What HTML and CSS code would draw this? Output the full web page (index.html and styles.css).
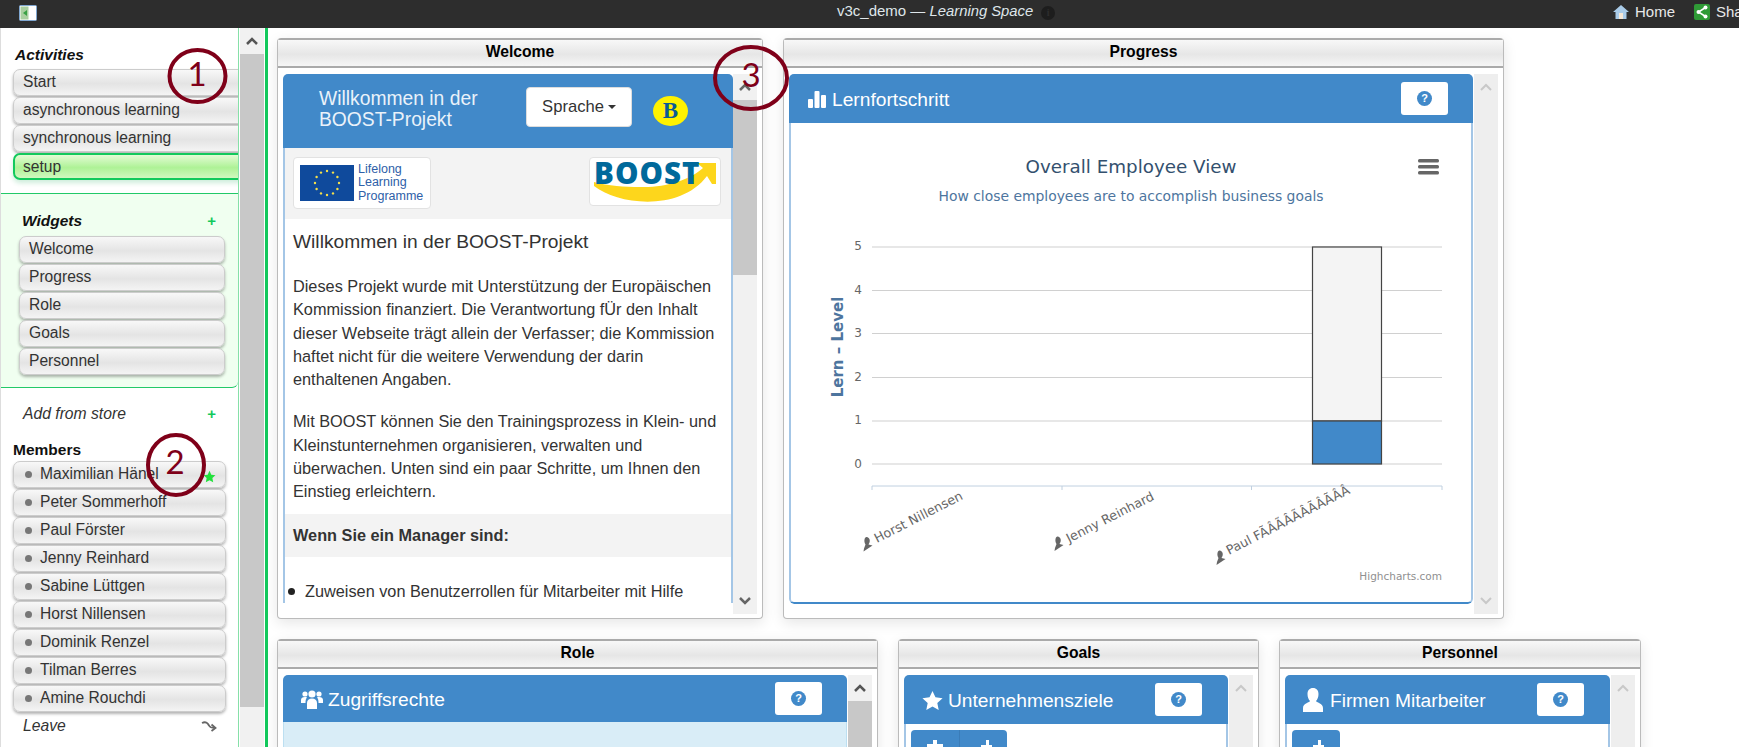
FILE: index.html
```html
<!DOCTYPE html>
<html lang="de">
<head>
<meta charset="utf-8">
<title>v3c_demo — Learning Space</title>
<link rel="stylesheet" href="styles.css">
</head>
<body>
<header class="topbar">
  <svg class="app-icon" viewBox="0 0 18 16"><rect x=".5" y=".5" width="17" height="15" rx="1" fill="#fff" stroke="#7fa6d0"/><rect x="1.5" y="1.5" width="8" height="13" fill="#a9cfa0"/><path d="M8 5 4 8l4 3z" fill="#39a045"/></svg>
  <div class="topbar-title">v3c_demo — <em>Learning Space</em><span class="info-dot">i</span></div>
  <nav class="topbar-links">
    <span class="top-link"><svg class="top-icon" viewBox="0 0 16 16"><path d="M8 1 0 8h2.500v7h11V8H16z" fill="#a9cbe8"/><rect x="6" y="9" width="4" height="6" fill="#f4e7d6"/></svg>Home</span>
    <span class="top-link"><svg class="top-icon" viewBox="0 0 16 16"><rect width="16" height="16" rx="2" fill="#2f9a36"/><path d="M11.500 3.500 4.500 8l7 4.500" fill="none" stroke="#fff" stroke-width="1.500"/><circle cx="4.500" cy="8" r="2" fill="#fff"/><circle cx="11.500" cy="3.500" r="2" fill="#fff"/><circle cx="11.500" cy="12.500" r="2" fill="#fff"/></svg>Share</span>
  </nav>
</header>

<div class="shell">
  <aside class="sidebar">
    <h3 class="side-title">Activities</h3>
    <ul class="btn-list activities">
      <li class="side-btn">Start</li>
      <li class="side-btn">asynchronous learning</li>
      <li class="side-btn">synchronous learning</li>
      <li class="side-btn active">setup</li>
    </ul>
    <section class="widgets-box">
      <div class="row-head"><h3 class="side-title">Widgets</h3><span class="plus">+</span></div>
      <ul class="btn-list">
        <li class="side-btn">Welcome</li>
        <li class="side-btn">Progress</li>
        <li class="side-btn">Role</li>
        <li class="side-btn">Goals</li>
        <li class="side-btn">Personnel</li>
      </ul>
    </section>
    <div class="add-store"><em>Add from store</em><span class="plus">+</span></div>
    <h3 class="members-title">Members</h3>
    <ul class="btn-list members">
      <li class="side-btn member"><i class="dot"></i>Maximilian Hänel<svg class="star" viewBox="0 0 24 24"><path d="M12 1.500 15.300 8.700 23 9.600 17.300 14.900 18.800 22.500 12 18.700 5.200 22.500 6.700 14.900 1 9.600 8.700 8.700z" fill="#22e03c"/></svg></li>
      <li class="side-btn member"><i class="dot"></i>Peter Sommerhoff</li>
      <li class="side-btn member"><i class="dot"></i>Paul Förster</li>
      <li class="side-btn member"><i class="dot"></i>Jenny Reinhard</li>
      <li class="side-btn member"><i class="dot"></i>Sabine Lüttgen</li>
      <li class="side-btn member"><i class="dot"></i>Horst Nillensen</li>
      <li class="side-btn member"><i class="dot"></i>Dominik Renzel</li>
      <li class="side-btn member"><i class="dot"></i>Tilman Berres</li>
      <li class="side-btn member"><i class="dot"></i>Amine Rouchdi</li>
    </ul>
    <div class="leave"><em>Leave</em><svg class="leave-icon" viewBox="0 0 16 12"><path d="M1 3C5 1 7 3.500 8 5.500 9 8 11 8 14 8" fill="none" stroke="#666" stroke-width="1.800"/><path d="M10.500 4.500 14.500 8 10.500 11" fill="none" stroke="#666" stroke-width="1.800"/></svg></div>
  </aside>
  <div class="side-scroll">
    <div class="sb-btn"><svg class="chev" viewBox="0 0 14 10"><path d="M2 8 7 3l5 5" fill="none" stroke="#555" stroke-width="2.500"/></svg></div>
    <div class="side-thumb"></div>
  </div>
  <div class="green-line"></div>

  <main class="board">
    <div class="board-row">
      <section class="widget w-welcome">
        <h4 class="widget-head">Welcome</h4>
        <div class="widget-body">
          <div class="panel">
            <div class="welcome-bar">
              <div class="welcome-title">Willkommen in der<br>BOOST-Projekt</div>
              <div class="lang-btn">Sprache<i class="caret"></i></div>
              <div class="b-badge">B</div>
            </div>
            <div class="panel-main">
              <div class="logo-row">
                <div class="logo-box lll">
                  <svg class="eu-flag" viewBox="0 0 54 36"><rect width="54" height="36" fill="#0f4a9c"/><g fill="#f5e04a"><circle cx="27" cy="6" r="1.200"/><circle cx="33" cy="7.600" r="1.200"/><circle cx="37.400" cy="12" r="1.200"/><circle cx="39" cy="18" r="1.200"/><circle cx="37.400" cy="24" r="1.200"/><circle cx="33" cy="28.400" r="1.200"/><circle cx="27" cy="30" r="1.200"/><circle cx="21" cy="28.400" r="1.200"/><circle cx="16.600" cy="24" r="1.200"/><circle cx="15" cy="18" r="1.200"/><circle cx="16.600" cy="12" r="1.200"/><circle cx="21" cy="7.600" r="1.200"/></g></svg>
                  <div class="lll-text">Lifelong<br>Learning<br>Programme</div>
                </div>
                <div class="logo-box boost">
                  <svg class="boost-logo" viewBox="590 158 130 47"><path d="M594 186C618 205 680 212 707 176L712 184H716V163H697L703 168C690 180 664 188 640 187 625 187 608 186 594 182z" fill="#fdd61c"/><text x="594" y="184" class="boost-text">BOOST</text></svg>
                </div>
              </div>
              <article class="welcome-text">
                <h2 class="w-h">Willkommen in der BOOST-Projekt</h2>
                <p class="w-p">Dieses Projekt wurde mit Unterstützung der Europäischen Kommission finanziert. Die Verantwortung fÜr den Inhalt dieser Webseite trägt allein der Verfasser; die Kommission haftet nicht für die weitere Verwendung der darin enthaltenen Angaben.</p>
                <p class="w-p">Mit BOOST können Sie den Trainingsprozess in Klein- und Kleinstunternehmen organisieren, verwalten und überwachen. Unten sind ein paar Schritte, um Ihnen den Einstieg erleichtern.</p>
              </article>
              <div class="manager-band">Wenn Sie ein Manager sind:</div>
              <ul class="w-list"><li>Zuweisen von Benutzerrollen für Mitarbeiter mit Hilfe</li></ul>
            </div>
          </div>
          <div class="vbar">
            <div class="sb-btn tall"><svg class="chev" viewBox="0 0 14 10"><path d="M2 8 7 3l5 5" fill="none" stroke="#666" stroke-width="2.500"/></svg></div>
            <div class="thumb thumb-welcome"></div>
            <div class="track"></div>
            <div class="sb-btn tall"><svg class="chev" viewBox="0 0 14 10"><path d="M2 2l5 5 5-5" fill="none" stroke="#666" stroke-width="2.500"/></svg></div>
          </div>
        </div>
      </section>

      <section class="widget w-progress">
        <h4 class="widget-head">Progress</h4>
        <div class="widget-body">
          <div class="panel panel-chart">
            <div class="blue-bar bar-progress">
              <span class="bar-title"><svg class="bar-icon" viewBox="0 0 18 18"><rect x="0" y="9" width="5" height="9" rx="1" fill="#fff"/><rect x="6.500" y="1" width="5" height="17" rx="1" fill="#fff"/><rect x="13" y="5" width="5" height="13" rx="1" fill="#fff"/></svg>Lernfortschritt</span>
              <span class="help-btn"><span class="help-q">?</span></span>
            </div>
            <div class="panel-main main-chart">
            <svg class="chart" viewBox="791 123 680 479">
              <text x="1131" y="173" class="c-title">Overall Employee View</text>
              <text x="1131" y="201" class="c-sub">How close employees are to accomplish business goals</text>
              <g fill="#666"><rect x="1418" y="159" width="21" height="3.500" rx="1.500"/><rect x="1418" y="165" width="21" height="3.500" rx="1.500"/><rect x="1418" y="171" width="21" height="3.500" rx="1.500"/></g>
              <g stroke="#d0d0d0" stroke-width="1.200"><path d="M872 247H1442M872 290.500H1442M872 333.500H1442M872 377.500H1442M872 421H1442M872 464H1442"/></g>
              <g class="c-y"><text x="862" y="250">5</text><text x="862" y="294">4</text><text x="862" y="337">3</text><text x="862" y="381">2</text><text x="862" y="424">1</text><text x="862" y="468">0</text></g>
              <text transform="translate(843 347) rotate(-90)" class="c-ytitle">Lern – Level</text>
              <rect x="1312.500" y="247" width="69" height="174" fill="#f4f4f4" stroke="#444" stroke-width="1.200"/>
              <rect x="1312.500" y="421" width="69" height="43" fill="#4189c9" stroke="#444" stroke-width="1.200"/>
              <path d="M872 490V486H1442V490M1062 486V490M1251.500 486V490" fill="none" stroke="#c0d0e0"/>
              <g class="c-x">
                <text transform="translate(877 543) rotate(-27)">Horst Nillensen</text>
                <text transform="translate(1069 543) rotate(-27)">Jenny Reinhard</text>
                <text transform="translate(1229 555) rotate(-27)">Paul FÃÂÃÂÃÂÃÂÃÂÂ</text>
              </g>
              <g fill="#666">
                <path d="M866 537c3 0 4.500 2.500 3.500 5.500l-1 2 4 1-9 6 .5-3 1.500-4c-2-3-1-7.500 1-7.500z"/>
                <path d="M1057 536.500c3 0 4.500 2.500 3.500 5.500l-1 2 4 1-9 6 .5-3 1.500-4c-2-3-1-7.500 1-7.500z"/>
                <path d="M1219 550.500c3 0 4.500 2.500 3.500 5.500l-1 2 4 1-9 6 .5-3 1.500-4c-2-3-1-7.500 1-7.500z"/>
              </g>
              <text x="1442" y="580" class="c-credit">Highcharts.com</text>
            </svg>
            </div>
          </div>
          <div class="vbar off">
            <div class="sb-btn tall"><svg class="chev" viewBox="0 0 14 10"><path d="M2 8 7 3l5 5" fill="none" stroke="#c8c8c8" stroke-width="2"/></svg></div>
            <div class="track"></div>
            <div class="sb-btn tall"><svg class="chev" viewBox="0 0 14 10"><path d="M2 2l5 5 5-5" fill="none" stroke="#c8c8c8" stroke-width="2"/></svg></div>
          </div>
        </div>
      </section>
    </div>

    <div class="board-row row-lower">
      <section class="widget w-role">
        <h4 class="widget-head">Role</h4>
        <div class="widget-body">
          <div class="panel">
            <div class="blue-bar bar-role">
              <span class="bar-title"><svg class="bar-icon icon-users" viewBox="0 0 22 20"><g fill="#fff"><circle cx="11" cy="5" r="3.600"/><circle cx="4" cy="5" r="2.600"/><circle cx="18" cy="5" r="2.600"/><path d="M6 20v-6c0-3 2-4.500 5-4.500s5 1.500 5 4.500v6z"/><path d="M0 14v-3c0-2 1.500-3 4-3 .8 0 1.500.1 2 .4C4.800 9.600 4.500 11 4.500 14z"/><path d="M22 14v-3c0-2-1.500-3-4-3-.8 0-1.500.1-2 .4 1.200 1.200 1.500 2.600 1.500 5.600z"/></g></svg>Zugriffsrechte</span>
              <span class="help-btn"><span class="help-q">?</span></span>
            </div>
            <div class="role-body"></div>
          </div>
          <div class="vbar">
            <div class="sb-btn tall"><svg class="chev" viewBox="0 0 14 10"><path d="M2 8 7 3l5 5" fill="none" stroke="#555" stroke-width="2.500"/></svg></div>
            <div class="thumb"></div>
          </div>
        </div>
      </section>

      <section class="widget w-goals">
        <h4 class="widget-head">Goals</h4>
        <div class="widget-body">
          <div class="panel">
            <div class="blue-bar bar-goals">
              <span class="bar-title"><svg class="bar-icon icon-star" viewBox="0 0 24 24"><path d="M12 1 15.400 8.400 23.500 9.300 17.500 14.800 19.100 22.800 12 18.800 4.900 22.800 6.500 14.800.5 9.300 8.600 8.400z" fill="#fff"/></svg>Unternehmensziele</span>
              <span class="help-btn"><span class="help-q">?</span></span>
            </div>
            <div class="panel-main tool-row">
              <div class="tool-group">
                <span class="tool-btn"><svg class="tool-icon" viewBox="0 0 16 12"><path d="M6 0h4v4h6v8H0V4h6z" fill="#fff"/></svg></span>
                <span class="tool-btn"><svg class="tool-icon" viewBox="0 0 16 12"><path d="M10 0h3v5h3v7H5V5h5z" fill="#fff"/></svg></span>
              </div>
            </div>
          </div>
          <div class="vbar off">
            <div class="sb-btn tall"><svg class="chev" viewBox="0 0 14 10"><path d="M2 8 7 3l5 5" fill="none" stroke="#c8c8c8" stroke-width="2"/></svg></div>
            <div class="track"></div>
          </div>
        </div>
      </section>

      <section class="widget w-personnel">
        <h4 class="widget-head">Personnel</h4>
        <div class="widget-body">
          <div class="panel">
            <div class="blue-bar bar-goals">
              <span class="bar-title"><svg class="bar-icon icon-user" viewBox="0 0 20 24"><path d="M10 0c3.500 0 5.500 2.500 5.500 6 0 3-1 5.500-2.500 7 0 1.500 7 2 7 7v4H0v-4c0-5 7-5.500 7-7C5.500 11.500 4.500 9 4.500 6 4.500 2.500 6.500 0 10 0z" fill="#fff"/></svg>Firmen Mitarbeiter</span>
              <span class="help-btn"><span class="help-q">?</span></span>
            </div>
            <div class="panel-main tool-row">
              <div class="tool-group">
                <span class="tool-btn"><svg class="tool-icon" viewBox="0 0 16 12"><path d="M10 0h3v5h3v7H5V5h5z" fill="#fff"/></svg></span>
              </div>
            </div>
          </div>
          <div class="vbar off">
            <div class="sb-btn tall"><svg class="chev" viewBox="0 0 14 10"><path d="M2 8 7 3l5 5" fill="none" stroke="#c8c8c8" stroke-width="2"/></svg></div>
            <div class="track"></div>
          </div>
        </div>
      </section>
    </div>
  </main>
</div>

<svg class="notes" viewBox="0 0 1739 747">
  <g class="note-ring"><ellipse cx="197.500" cy="76" rx="28" ry="26"/><ellipse cx="176" cy="465" rx="28" ry="30"/><ellipse cx="751" cy="78" rx="36" ry="31"/></g>
  <g class="note-num"><text x="197" y="86">1</text><text x="175" y="474">2</text><text x="751" y="87">3</text></g>
</svg>
</body>
</html>
```

FILE: styles.css
```css
* { box-sizing: border-box; }
html, body { margin: 0; padding: 0; height: 747px; overflow: hidden; background: #fff; }
body { font-family: "Liberation Sans", Arial, sans-serif; color: #333; font-size: 14px; }
h2, h3, h4, p, ul { margin: 0; padding: 0; }
ul { list-style: none; }

/* top bar */
.topbar { height: 28px; background: #2d2d2d; color: #e8e8e8; display: flex; align-items: center; position: relative; padding-left: 19px; }
.app-icon { width: 18px; height: 16px; margin-top: -3px; }
.topbar-title { position: absolute; left: 837px; top: 3px; font-size: 15px; line-height: 16px; white-space: nowrap; color: #dfe6ea; }
.topbar-title em { font-size: 14.800px; }
.info-dot { display: inline-block; width: 14px; height: 14px; border-radius: 50%; background: #1d1d1d; color: #2d2d2d; margin-left: 8px; font: bold 10px/14px "Liberation Serif", serif; text-align: center; vertical-align: 0; }
.topbar-links { position: absolute; left: 1613px; top: 3px; display: flex; gap: 19px; font-size: 15px; line-height: 17px; white-space: nowrap; }
.top-link { display: flex; align-items: center; gap: 6px; }
.top-icon { width: 16px; height: 16px; }

/* shell */
.shell { display: flex; height: 719px; }
.sidebar { width: 239px; flex: none; overflow: hidden; border-left: 1px solid #ddd; border-right: 1px solid #86e0a8; padding-top: 18px; }
.side-scroll { width: 24px; flex: none; margin-left: 1px; background: #f1f1f1; display: flex; flex-direction: column; }
.side-scroll .sb-btn { height: 26px; }
.side-thumb { height: 653px; background: #c8c8c8; }
.green-line { width: 3px; flex: none; background: #12c95c; margin-left: 1px; }

/* sidebar */
.side-title { font-size: 15.500px; font-style: italic; font-weight: bold; color: #111; line-height: 17px; margin-left: 14px; }
.btn-list { display: flex; flex-direction: column; gap: 1px; }
.side-btn { height: 27px; line-height: 24px; font-size: 15.600px; color: #333; padding-left: 9px; border: 1px solid #ccc; border-radius: 7px; background: linear-gradient(#f8f8f8, #e4e4e4 55%, #f4f4f4); box-shadow: 0 2px 3px rgba(0, 0, 0, .3); white-space: nowrap; }
.activities { margin: 6px -12px 0 12px; }
.side-btn.active { background: linear-gradient(#e3fbd5, #aef296 55%, #d0f8bf); border: 2px solid #12c95c; line-height: 23px; padding-left: 8px; box-shadow: 0 3px 5px rgba(0, 160, 70, .2); }
.widgets-box { margin-top: 13px; height: 195px; background: #f0fff0; border-top: 1px solid #22c968; border-bottom: 1px solid #22c968; border-bottom-right-radius: 6px; padding: 18px 0 0 18px; }
.row-head { display: flex; justify-content: space-between; padding-right: 22px; align-items: center; }
.row-head .side-title { margin-left: 3px; }
.plus { color: #12c95c; font-weight: bold; font-size: 15px; line-height: 17px; }
.widgets-box .btn-list { margin-top: 7px; width: 206px; }
.add-store { margin: 17px 22px 0 22px; display: flex; justify-content: space-between; font-size: 15.700px; line-height: 17px; }
.members-title { font-size: 15.500px; font-weight: bold; color: #111; line-height: 17px; margin: 19px 0 0 12px; }
.members { margin: 3px 0 0 12px; width: 213px; }
.member { position: relative; padding-left: 26px; }
.dot { position: absolute; left: 11px; top: 9px; width: 7px; height: 7px; border-radius: 50%; background: #777; }
.star { position: absolute; left: 189px; top: 8px; width: 13px; height: 13px; }
.leave { margin: 5px 21px 0 22px; display: flex; justify-content: space-between; align-items: center; font-size: 15.700px; line-height: 17px; }
.leave-icon { width: 16px; height: 12px; }

/* board */
.board { flex: 1; min-width: 0; padding: 10px 0 0 9px; }
.board-row { display: flex; gap: 20px; align-items: flex-start; }
.row-lower { margin-top: 20px; }
.widget { background: #fff; border: 1px solid #bbb; border-top: 0; border-radius: 4px; box-shadow: 0 4px 14px rgba(0, 0, 0, .1); overflow: hidden; }
.w-welcome { width: 486px; height: 581px; }
.w-progress { width: 721px; height: 581px; }
.w-role { width: 601px; height: 130px; }
.w-goals { width: 361px; height: 130px; }
.w-personnel { width: 362px; height: 130px; }
.widget-head { height: 30px; border-top: 2px solid #aaa; border-bottom: 2px solid #aaa; background: linear-gradient(#f8f8f8, #e6e6e6 55%, #f6f6f6); font-size: 15.700px; line-height: 23px; text-align: center; color: #000; }
.widget-body { display: flex; padding: 6px 5px 0; height: 546px; }
.panel { flex: 1; min-width: 0; height: 540px; overflow: hidden; border-radius: 5px 5px 0 0; background: #fff; }
.panel-main { border-left: 2px solid #a4c6e6; border-right: 2px solid #a4c6e6; }

/* scrollbars */
.vbar { width: 24px; flex: none; background: #f1f1f1; display: flex; flex-direction: column; }
.sb-btn { height: 26px; flex: none; display: flex; align-items: center; justify-content: center; }
.chev { width: 14px; height: 10px; }
.thumb { height: 175px; background: #c8c8c8; flex: none; }
.track { flex: 1; }
.off { background: #eee; }
.w-progress .vbar, .w-goals .vbar, .w-personnel .vbar, .w-role .vbar { margin-left: 1px; }

/* welcome */
.welcome-bar { height: 74px; background: #4189c9; position: relative; }
.welcome-title { position: absolute; left: 36px; top: 14px; color: #eaf2fa; font-size: 19.300px; line-height: 21px; white-space: nowrap; }
.lang-btn { position: absolute; left: 243px; top: 13px; width: 106px; height: 40px; background: #fff; border: 1px solid #ddd; border-radius: 4px; color: #333; font-size: 16.600px; line-height: 38px; text-align: center; }
.caret { display: inline-block; margin-left: 4px; border: 4px solid transparent; border-top-color: #333; border-bottom: 0; vertical-align: 3px; }
.b-badge { position: absolute; left: 370px; top: 22px; width: 35px; height: 30px; border-radius: 50%; background: #fff200; color: #0b5a96; font: bold 23px/30px "Liberation Serif", serif; text-align: center; }
.logo-row { height: 71px; background: #f3f3f3; display: flex; justify-content: space-between; padding: 9px 10px 0 8px; align-items: flex-start; }
.logo-box { background: #fff; border: 1px solid #e2e2e2; border-radius: 4px; }
.lll { width: 138px; height: 52px; display: flex; align-items: center; padding-left: 6px; gap: 4px; }
.eu-flag { width: 54px; height: 36px; flex: none; }
.lll-text { font-size: 12.500px; line-height: 13.300px; color: #2e60a8; }
.boost { width: 132px; height: 49px; overflow: hidden; }
.boost-logo { display: block; width: 130px; height: 47px; }
.boost-text { font: 800 29.500px "Open Sans", sans-serif; fill: #00699b; letter-spacing: 1px; }
.welcome-text { padding: 12px 8px 0; height: 295px; }
.w-h { font-size: 19.200px; font-weight: normal; line-height: 22px; color: #333; margin-bottom: 22px; }
.w-p { font-size: 16.300px; line-height: 23.300px; color: #333; margin-bottom: 19px; }
.manager-band { height: 43px; background: #f3f3f3; padding-left: 8px; font-size: 16.300px; font-weight: bold; line-height: 42px; color: #333; }
.w-list { padding: 23px 0 0 20px; font-size: 16.300px; line-height: 23px; position: relative; white-space: nowrap; }
.w-list li::before { content: ""; position: absolute; left: 3px; top: 31px; width: 7px; height: 7px; border-radius: 50%; background: #222; }

/* blue bars */
.blue-bar { background: #4189c9; display: flex; justify-content: space-between; align-items: center; color: #fff; }
.bar-progress { height: 49px; padding: 0 25px 0 19px; }
.bar-role { height: 47px; padding: 0 25px 0 18px; }
.bar-goals { height: 49px; padding: 0 26px 0 18px; }
.bar-title { display: inline-flex; align-items: center; gap: 6px; font-size: 19.200px; padding-top: 3px; white-space: nowrap; }
.bar-icon { width: 18px; height: 18px; margin-top: -2px; }
.icon-users { width: 22px; height: 20px; margin-right: -1px; }
.icon-star { width: 21px; height: 21px; margin-right: -1px; }
.icon-user { width: 20px; height: 24px; margin-right: 1px; }
.help-btn { width: 47px; height: 33px; background: #fff; border-radius: 3px; display: flex; align-items: center; justify-content: center; }
.help-q { width: 15px; height: 15px; border-radius: 50%; background: #4189c9; color: #fff; font-size: 11px; font-weight: bold; line-height: 15px; text-align: center; }

/* chart */
.panel-chart { height: 530px; border-radius: 5px; }
.main-chart { border-bottom: 2px solid #4189c9; border-radius: 0 0 5px 5px; }
.chart { display: block; width: 680px; height: 479px; }
.c-title { font: 18.300px "DejaVu Sans", sans-serif; fill: #33506e; text-anchor: middle; }
.c-sub { font: 13.900px "DejaVu Sans", sans-serif; fill: #4d759e; text-anchor: middle; }
.c-y text { font: 12px "DejaVu Sans", sans-serif; fill: #666; text-anchor: end; }
.c-ytitle { font: bold 15px "DejaVu Sans", sans-serif; fill: #4d759e; text-anchor: middle; }
.c-x text { font: 12.800px "DejaVu Sans", sans-serif; fill: #666; }
.c-credit { font: 10.500px "DejaVu Sans", sans-serif; fill: #909090; text-anchor: end; }

/* lower row */
.role-body { height: 480px; background: #d9edf7; border-left: 1px solid #bcdff1; border-right: 1px solid #bcdff1; }
.tool-row { padding: 6px 0 0 5px; }
.tool-group { display: inline-flex; background: #4189c9; border-radius: 4px; overflow: hidden; height: 40px; }
.tool-btn { width: 48px; display: flex; justify-content: center; padding-top: 10px; }
.tool-btn + .tool-btn { border-left: 1px solid #3a7cb8; }
.tool-icon { width: 16px; height: 12px; }

/* annotations */
.notes { position: absolute; left: 0; top: 0; width: 1739px; height: 747px; pointer-events: none; }
.note-ring ellipse { fill: none; stroke: #7f0019; stroke-width: 4; }
.note-num text { font: 33px Lato, sans-serif; fill: #7f0019; text-anchor: middle; }
```
